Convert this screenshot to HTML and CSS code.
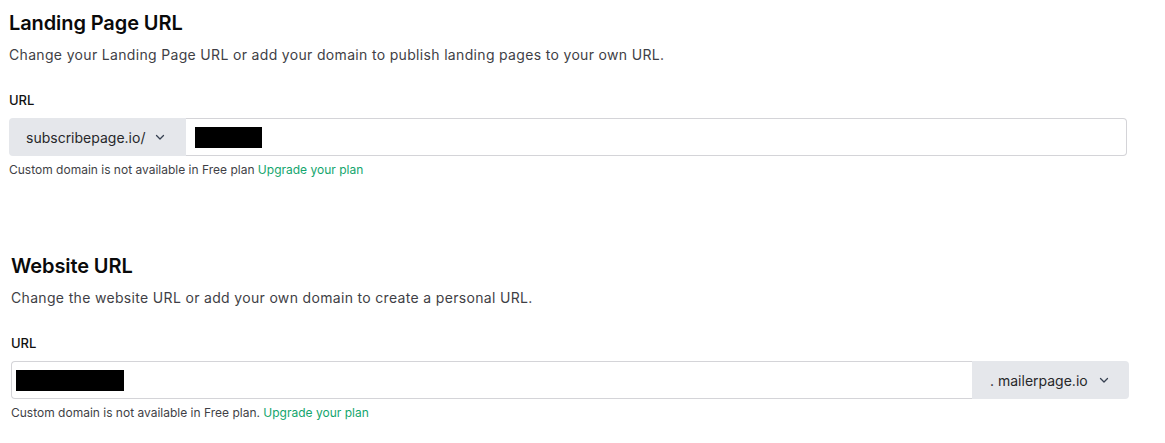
FILE: index.html
```html
<!DOCTYPE html>
<html lang="en">
<head>
<meta charset="utf-8">
<link rel="stylesheet" href="styles.css">
</head>
<body>
<div class="page">
  <section class="panel panel-top">
    <h2 class="title">Landing Page URL</h2>
    <p class="desc">Change your Landing Page URL or add your domain to publish landing pages to your own URL.</p>
    <label class="label">URL</label>
    <div class="group">
      <div class="addon addon-left">subscribepage.io/
        <svg class="chev" width="12" height="12" viewBox="0 0 12 12"><path d="M2.5 4.5 6 8l3.5-3.5" fill="none" stroke="#374151" stroke-width="1.3" stroke-linecap="round" stroke-linejoin="round"/></svg>
      </div>
      <div class="field field-right"><span class="redact redact-a"></span></div>
    </div>
    <p class="help">Custom domain is not available in Free plan <a class="link">Upgrade your plan</a></p>
  </section>
  <section class="panel panel-bottom">
    <h2 class="title">Website URL</h2>
    <p class="desc">Change the website URL or add your own domain to create a personal URL.</p>
    <label class="label">URL</label>
    <div class="group">
      <div class="field field-left"><span class="redact redact-b"></span></div>
      <div class="addon addon-right">. mailerpage.io
        <svg class="chev" width="12" height="12" viewBox="0 0 12 12"><path d="M2.5 4.5 6 8l3.5-3.5" fill="none" stroke="#374151" stroke-width="1.3" stroke-linecap="round" stroke-linejoin="round"/></svg>
      </div>
    </div>
    <p class="help">Custom domain is not available in Free plan. <a class="link">Upgrade your plan</a></p>
  </section>
</div>
</body>
</html>
```

FILE: styles.css
```css
html, body {
  margin: 0;
  padding: 0;
  background: #fff;
}
body {
  font-family: Inter, "Noto Sans", sans-serif;
  color: #111;
  width: 1165px;
  height: 443px;
  overflow: hidden;
}
.page {
  display: flex;
  flex-direction: column;
}
.panel {
  display: flex;
  flex-direction: column;
  width: 1118px;
}
.panel-top {
  padding: 11px 0 0 9px;
  height: 197px;
  box-sizing: border-box;
  border-left: 2px solid #f6f6f7;
  margin-left: -2px;
}
.panel-bottom {
  padding: 57px 0 0 11px;
  box-sizing: border-box;
  border-left: 4px solid #f4f4f5;
  margin-left: -4px;
  height: 246px;
}
.title {
  margin: 0;
  font-size: 20px;
  font-weight: 600;
  line-height: 24px;
  color: #0a0a0a;
  letter-spacing: -0.1px;
}
.desc {
  margin: 9px 0 0;
  font-size: 14px;
  line-height: 22px;
  color: #3f3f46;
  letter-spacing: 0.33px;
}
.label {
  margin-top: 26px;
  font-size: 13px;
  font-weight: 500;
  line-height: 16px;
  color: #111;
}
.group {
  margin-top: 10px;
  display: flex;
  height: 38px;
  width: 1118px;
}
.addon {
  background: #e5e7eb;
  display: flex;
  align-items: center;
  font-size: 14px;
  color: #27272a;
  box-sizing: border-box;
}
.addon-left {
  width: 177px;
  padding-left: 17px;
  border-radius: 4px 0 0 4px;
}
.addon-right {
  width: 157px;
  padding-left: 18px;
  border-radius: 0 4px 4px 0;
}
.chev {
  margin-left: 9px;
}
.addon-right .chev {
  margin-left: 10px;
}
.field {
  flex: 1;
  border: 1px solid #d4d4d8;
  background: #fff;
  display: flex;
  align-items: center;
  box-sizing: border-box;
}
.field-right {
  border-left: none;
  border-radius: 0 4px 4px 0;
  padding-left: 9px;
}
.field-left {
  border-right: none;
  border-radius: 4px 0 0 4px;
  padding-left: 4px;
}
.redact {
  display: block;
  background: #000;
  height: 21px;
}
.redact-a { width: 67px; }
.redact-b { width: 108px; }
.help {
  margin: 7px 0 0;
  font-size: 12px;
  line-height: 14px;
  color: #3f3f46;
}
.link {
  color: #13a56d;
  text-decoration: none;
}
```
